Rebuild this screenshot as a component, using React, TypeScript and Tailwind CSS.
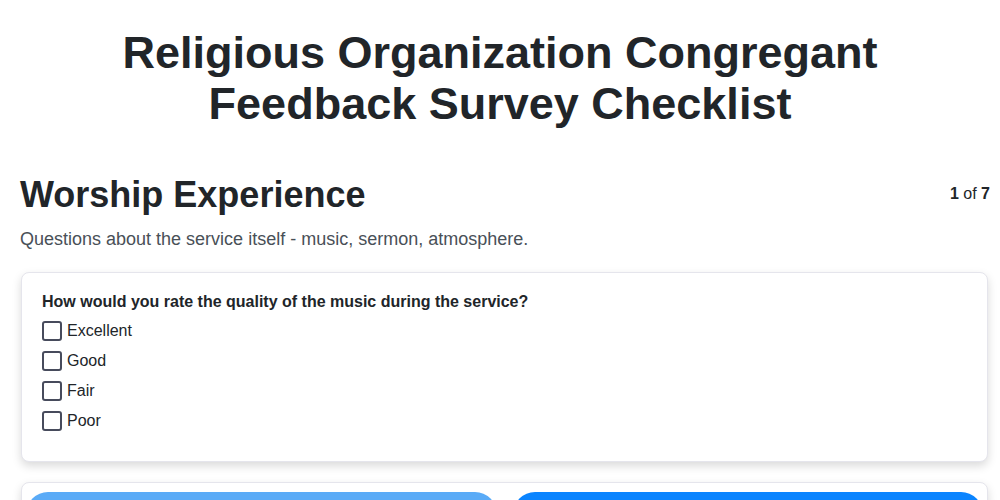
import React from "react";

const options = ["Excellent", "Good", "Fair", "Poor"];

export default function App() {
  return (
    <div className="min-h-screen bg-white text-[#212529]" style={{ fontFamily: '"Liberation Sans", Arial, sans-serif' }}>
      <div className="mx-auto max-w-[1000px] pt-[27px]">
        <h1 className="px-5 text-center text-[45px] font-bold leading-[51px] text-[#212529]">
          Religious Organization Congregant
          <br />
          Feedback Survey Checklist
        </h1>
        <div className="pl-5 pr-[10px]">
          <div className="mt-[44px] flex items-start justify-between">
            <h2 className="text-[36px] font-bold leading-[43px]">Worship Experience</h2>
            <div className="pt-[9px] text-[16px]">
              <span className="font-bold">1</span> of <span className="font-bold">7</span>
            </div>
          </div>
          <p className="mt-[10px] text-[18px] leading-[27px] text-[#495057]">
            Questions about the service itself - music, sermon, atmosphere.
          </p>
          <div className="ml-[1px] mr-[2px] mt-[19px] rounded-lg border border-[#e5e5ec] bg-white px-5 pb-[25px] pt-[17px] shadow-[0_4px_10px_rgba(0,0,0,0.15)]">
            <div className="text-[16px] font-bold leading-[24px]">
              How would you rate the quality of the music during the service?
            </div>
            <div className="mt-[2px] flex flex-col">
              {options.map((o) => (
                <label key={o} className="flex h-[30px] items-center gap-[5px] text-[16px]">
                  <span className="h-[20px] w-[20px] rounded-[3px] border-2 border-[#474b5c] bg-white" />
                  <span>{o}</span>
                </label>
              ))}
            </div>
          </div>
          <div className="ml-[1px] mr-[2px] mt-[20px] flex gap-4 rounded-lg border border-[#e5e5ec] bg-white px-[4px] pt-[9px] pb-[9px] shadow-[0_4px_10px_rgba(0,0,0,0.15)]">
            <button className="h-[44px] flex-1 rounded-full bg-[#5aabf7] text-[16px] font-bold text-white">Previous</button>
            <button className="h-[44px] flex-1 rounded-full bg-[#0a84ff] text-[16px] font-bold text-white">Next</button>
          </div>
        </div>
      </div>
    </div>
  );
}
